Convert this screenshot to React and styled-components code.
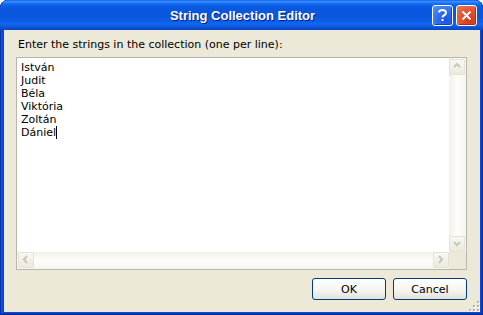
import React from 'react'
import styled, { createGlobalStyle } from 'styled-components'

const GlobalStyle = createGlobalStyle`
    html, body {
        margin: 0;
        padding: 0;
        background: #ffffff;
    }
    body {
        font-family: "DejaVu Sans", Tahoma, sans-serif;
        font-size: 11px;
    }
`

const Window = styled.div`
    width: 483px;
    height: 315px;
    box-sizing: border-box;
    display: flex;
    flex-direction: column;
    border-radius: 8px 8px 0 0;
    background: #0a46d8;
    box-shadow: inset 1px 0 #002fa8, inset -1px 0 #002b9a, inset 0 -1px #00258c,
        inset 2px 0 #1654e4, inset -2px 0 #0a3ec8, inset 0 -2px #0a3cc4;
    overflow: hidden;
`

const TitleBar = styled.div`
    height: 30px;
    flex: none;
    display: grid;
    grid-template-columns: 1fr auto 1fr;
    align-items: center;
    padding: 0 6px 0 4px;
    background: linear-gradient(
        to bottom,
        #0a5ae8 0%,
        #3d8cff 4%,
        #2b82ff 8%,
        #1470f4 12%,
        #0d60e6 18%,
        #0a58df 26%,
        #0a57de 56%,
        #0d5de6 70%,
        #1266f0 80%,
        #0e5ce2 88%,
        #0a4fd0 94%,
        #0846c4 100%
    );
    border-radius: 8px 8px 0 0;
`

const Title = styled.div`
    grid-column: 2;
    color: #ffffff;
    font-family: "Liberation Sans", Arial, sans-serif;
    font-weight: bold;
    font-size: 13px;
    text-shadow: 1px 1px #0a1e80;
    white-space: nowrap;
    padding-left: 4px;
`

const CaptionButtons = styled.div`
    grid-column: 3;
    justify-self: end;
    display: flex;
    gap: 3px;
`

const CaptionButton = styled.div`
    width: 21px;
    height: 21px;
    box-sizing: border-box;
    border: 1px solid #ffffff;
    border-radius: 3px;
    display: flex;
    align-items: center;
    justify-content: center;
    background: ${p =>
        p.$close
            ? 'radial-gradient(circle at 70% 75%, #d2391c 0%, #e1502e 45%, #ec7a5c 100%)'
            : 'radial-gradient(circle at 70% 75%, #1c52e0 0%, #2e6cf0 45%, #5d93ff 100%)'};
    box-shadow: inset -1px -1px ${p => (p.$close ? '#b02a10' : '#1443b8')};
`

const Client = styled.div`
    flex: 1;
    margin: 0 3px 6px 4px;
    background: #ece9d8;
    display: flex;
    flex-direction: column;
    padding: 8px 13px 0 12px;
`

const Prompt = styled.div`
    color: #000000;
    font-size: 11px;
    line-height: 13px;
    padding-left: 2px;
    margin-bottom: 6px;
    white-space: nowrap;
`

const Editor = styled.div`
    height: 213px;
    box-sizing: border-box;
    border: 1px solid #b7b5ad;
    background: #ffffff;
    display: grid;
    grid-template-columns: 1fr 17px;
    grid-template-rows: 1fr 17px;
`

const Lines = styled.div`
    padding: 3px 4px;
    font-size: 11px;
    line-height: 13px;
    color: #000000;
`

const Line = styled.div`
    white-space: nowrap;
`

const Caret = styled.span`
    display: inline-block;
    width: 1px;
    height: 13px;
    background: #000000;
    vertical-align: top;
`

const VTrack = styled.div`
    display: flex;
    flex-direction: column;
    justify-content: space-between;
    background: linear-gradient(to right, #f3f1ec, #fdfdfa 50%, #f6f5f0);
    padding: 1px 1px 0 0;
`

const HTrack = styled.div`
    display: flex;
    justify-content: space-between;
    background: linear-gradient(to bottom, #f3f1ec, #fdfdfa 50%, #f6f5f0);
    padding: 0 0 0 1px;
`

const ArrowButton = styled.div`
    width: 16px;
    height: 16px;
    box-sizing: border-box;
    border: 1px solid #e6e3d6;
    border-radius: 1px;
    background: linear-gradient(to bottom, #f8f7f2, #ebe9df);
    display: flex;
    align-items: center;
    justify-content: center;
`

const Corner = styled.div`
    background: #ece9d8;
`

const ButtonRow = styled.div`
    display: flex;
    justify-content: flex-end;
    gap: 7px;
    margin-top: 8px;
`

const PushButton = styled.div`
    width: 74px;
    height: 22px;
    box-sizing: border-box;
    border: 1px solid #003c74;
    border-radius: 3px;
    background: linear-gradient(to bottom, #ffffff, #f3f3ef 60%, #e3e2da);
    display: flex;
    align-items: center;
    justify-content: center;
    font-size: 11px;
    color: #000000;
`

const GripArea = styled.div`
    flex: 1;
    display: flex;
    justify-content: flex-end;
    align-items: flex-end;
    margin-right: -13px;
`

const Chevron = ({ dir }) => {
    const pts = {
        up: '4,7 7,4 10,7',
        down: '4,5 7,8 10,5',
        left: '8,3 5,6.5 8,10',
        right: '5,3 8,6.5 5,10',
    }[dir]
    return (
        <svg width="14" height="14" viewBox="0 0 14 14">
            <polyline points={pts} fill="none" stroke="#c9c7ba" strokeWidth="2" />
        </svg>
    )
}

const Grip = () => (
    <svg width="12" height="12" viewBox="0 0 12 12">
        {[
            [9, 1],
            [5, 5],
            [9, 5],
            [1, 9],
            [5, 9],
            [9, 9],
        ].map(([x, y]) => (
            <g key={`${x}-${y}`}>
                <rect x={x + 1} y={y + 1} width="2" height="2" fill="#ffffff" />
                <rect x={x} y={y} width="2" height="2" fill="#b9b6a7" />
            </g>
        ))}
    </svg>
)

const names = ['István', 'Judit', 'Béla', 'Viktória', 'Zoltán', 'Dániel']

export default function App() {
    return (
        <>
            <GlobalStyle />
            <Window>
                <TitleBar>
                    <Title>String Collection Editor</Title>
                    <CaptionButtons>
                        <CaptionButton>
                            <svg width="11" height="13" viewBox="0 0 11 13">
                                <path
                                    d="M2 3.5 Q2 1 5.5 1 Q9 1 9 3.8 Q9 5.5 6.8 6.5 Q5.5 7.1 5.5 8.5"
                                    fill="none"
                                    stroke="#ffffff"
                                    strokeWidth="2"
                                />
                                <rect x="4.5" y="10" width="2" height="2" fill="#ffffff" />
                            </svg>
                        </CaptionButton>
                        <CaptionButton $close>
                            <svg width="11" height="11" viewBox="0 0 11 11">
                                <path d="M1.5 1.5 L9.5 9.5 M9.5 1.5 L1.5 9.5" stroke="#ffffff" strokeWidth="2" />
                            </svg>
                        </CaptionButton>
                    </CaptionButtons>
                </TitleBar>
                <Client>
                    <Prompt>Enter the strings in the collection (one per line):</Prompt>
                    <Editor>
                        <Lines>
                            {names.map((n, i) => (
                                <Line key={n}>
                                    {n}
                                    {i === names.length - 1 && <Caret />}
                                </Line>
                            ))}
                        </Lines>
                        <VTrack>
                            <ArrowButton>
                                <Chevron dir="up" />
                            </ArrowButton>
                            <ArrowButton>
                                <Chevron dir="down" />
                            </ArrowButton>
                        </VTrack>
                        <HTrack>
                            <ArrowButton>
                                <Chevron dir="left" />
                            </ArrowButton>
                            <ArrowButton>
                                <Chevron dir="right" />
                            </ArrowButton>
                        </HTrack>
                        <Corner />
                    </Editor>
                    <ButtonRow>
                        <PushButton>OK</PushButton>
                        <PushButton>Cancel</PushButton>
                    </ButtonRow>
                    <GripArea>
                        <Grip />
                    </GripArea>
                </Client>
            </Window>
        </>
    )
}
